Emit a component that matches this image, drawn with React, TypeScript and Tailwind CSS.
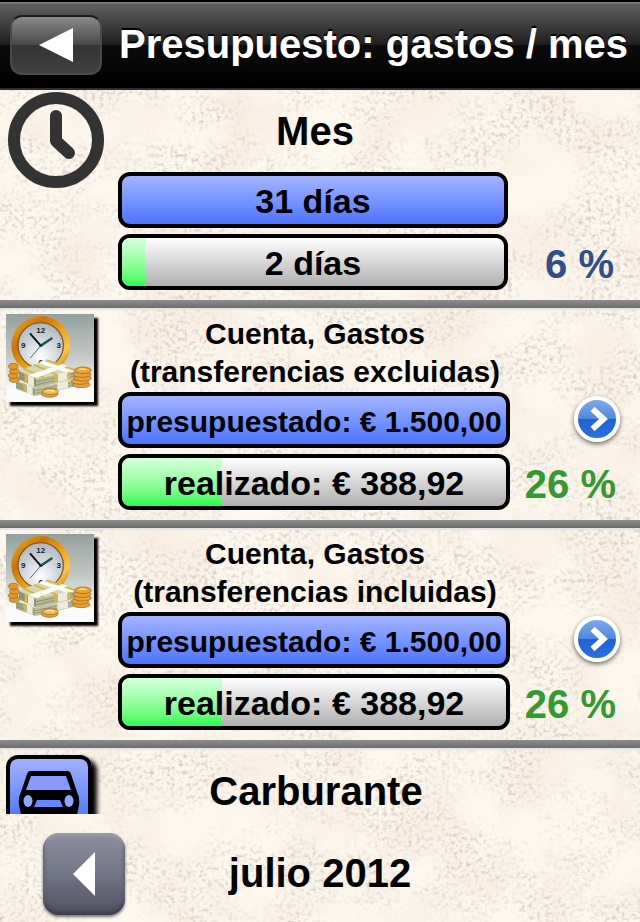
import React from 'react';

const bold = "font-['Liberation_Sans',Helvetica,Arial,sans-serif] font-bold";

function PaperTexture() {
  return (
    <svg className="absolute inset-0 -z-10 h-full w-full" aria-hidden="true">
      <filter id="patches" x="0" y="0" width="100%" height="100%">
        <feTurbulence type="fractalNoise" baseFrequency="0.014" numOctaves={5} seed={4} />
        <feColorMatrix values="0 0 0 0 0.93  0 0 0 0 0.82  0 0 0 0 0.74  1.4 0 0 0 -0.48" />
      </filter>
      <filter id="grain" x="0" y="0" width="100%" height="100%">
        <feTurbulence type="fractalNoise" baseFrequency="0.24" numOctaves={3} seed={11} result="fine" />
        <feColorMatrix in="fine" values="0 0 0 0 0.62  0 0 0 0 0.55  0 0 0 0 0.48  2.2 0 0 0 -1.02" result="specks" />
        <feTurbulence type="fractalNoise" baseFrequency="0.014 0.02" numOctaves={5} seed={23} />
        <feColorMatrix values="0 0 0 0 0  0 0 0 0 0  0 0 0 0 0  0 3 0 0 -1" result="mask" />
        <feComposite in="specks" in2="mask" operator="in" />
      </filter>
      <rect width="100%" height="100%" fill="#fdf8ee" />
      <rect width="100%" height="100%" filter="url(#patches)" />
      <rect width="100%" height="100%" filter="url(#grain)" />
    </svg>
  );
}

function ClockIcon() {
  return (
    <svg viewBox="0 0 96 96" className="size-24" fill="none" stroke="#333333" strokeWidth="12" aria-hidden="true">
      <circle cx="48" cy="48" r="42" />
      <path d="M48 24V49L61 61" strokeLinecap="round" strokeLinejoin="round" />
    </svg>
  );
}

function MoneyIcon() {
  return (
    <svg viewBox="0 0 264 264" className="size-[88px] shadow-[4px_4px_2px_#000]" aria-hidden="true">
      <defs>
        <linearGradient id="moneyBg" x1="0" y1="0" x2="0" y2="1">
          <stop offset="0" stopColor="#94a09c" />
          <stop offset=".5" stopColor="#c5cbc7" />
          <stop offset=".85" stopColor="#fafafa" />
        </linearGradient>
        <linearGradient id="goldRing" x1="0" y1="0" x2="1" y2="1">
          <stop offset="0" stopColor="#f0b52e" />
          <stop offset=".3" stopColor="#c87508" />
          <stop offset=".55" stopColor="#e9a41c" />
          <stop offset=".75" stopColor="#f7c94e" />
          <stop offset="1" stopColor="#a65c05" />
        </linearGradient>
        <radialGradient id="dial" cx=".5" cy=".75" r=".7">
          <stop offset="0" stopColor="#ffffff" />
          <stop offset=".5" stopColor="#d5dae0" />
          <stop offset="1" stopColor="#b0b8c2" />
        </radialGradient>
      </defs>
      <rect width="264" height="264" fill="url(#moneyBg)" />
      <circle cx="104" cy="94" r="88" fill="url(#goldRing)" />
      <circle cx="104" cy="94" r="68" fill="url(#dial)" stroke="#8a5a18" strokeWidth="4" />
      <g className="font-['Liberation_Sans',Arial,sans-serif] text-[24px] font-bold" fill="#15191d" textAnchor="middle">
        <text x="104" y="56">12</text>
        <text x="52" y="103">9</text>
        <text x="158" y="103">3</text>
        <text x="104" y="154">6</text>
      </g>
      <path d="M104 95L72 58" stroke="#101417" strokeWidth="6" />
      <path d="M104 95L139 72" stroke="#15534f" strokeWidth="7" />
      <path d="M114 84L72 133" stroke="#3a7d80" strokeWidth="3" />
      <circle cx="104" cy="94" r="5" fill="#15333a" />
      <g fill="#e39a2c" stroke="#9c5c12" strokeWidth="2">
        <ellipse cx="25" cy="197" rx="15" ry="8" />
        <ellipse cx="21" cy="185" rx="14" ry="8" />
        <ellipse cx="26" cy="172" rx="15" ry="8" />
        <ellipse cx="22" cy="157" rx="14" ry="9" />
      </g>
      <path d="M30 200L88 222V246L30 224Z" fill="#a5a884" />
      <path d="M88 222L214 196V216L88 246Z" fill="#bdbf9b" />
      <path d="M38 170L92 194V221L38 196Z" fill="#959a78" />
      <path d="M92 194L216 168V192L92 221Z" fill="#b7ba94" />
      <path d="M38 170L122 138L220 166L92 194Z" fill="#d5d7b2" />
      <g stroke="#7b8062" strokeWidth="2" fill="none">
        <path d="M38 178L92 203L216 176M38 187L92 212L216 184M30 208L88 230L214 203M30 216L88 238L214 210" />
      </g>
      <path d="M54 164L112 190M84 152L152 182M122 138L212 170" stroke="#d6b13c" strokeWidth="5" />
      <path d="M98 147L112 142L206 172L184 177ZM68 183L168 151L186 156L90 192Z" fill="#fbfbf5" />
      <path d="M66 183L84 191V217L66 209ZM62 212L80 219V243L62 236ZM156 180L184 174V198L156 204ZM154 208L186 201V221L154 228Z" fill="#ecebdc" />
      <path d="M56 178L64 182V208L56 205ZM186 174L192 173V197L186 198ZM52 208L60 211V235L52 232ZM146 182L154 180V205L146 207Z" fill="#d9b646" />
      <g fill="#e8a236" stroke="#9c5c12" strokeWidth="2">
        <ellipse cx="226" cy="212" rx="26" ry="9" />
        <ellipse cx="222" cy="202" rx="26" ry="9" />
        <ellipse cx="230" cy="192" rx="26" ry="9" />
        <ellipse cx="228" cy="181" rx="27" ry="9" />
        <ellipse cx="231" cy="169" rx="25" ry="10" />
        <ellipse cx="131" cy="240" rx="25" ry="10" />
        <ellipse cx="133" cy="233" rx="24" ry="9" fill="#f0bb58" />
      </g>
      <path d="M218 168Q229 162 241 168M120 232Q132 226 145 233" stroke="#ffe694" strokeWidth="4" fill="none" />
    </svg>
  );
}

function CarIcon() {
  return (
    <div className="h-[88px] w-[86px] rounded-xl border-4 border-black bg-linear-to-b from-[#a4b0ff] to-[#2e62ff] shadow-[5px_4px_5px_#000]">
      <svg viewBox="0 0 78 80" className="h-20 w-[78px]" aria-hidden="true">
        <path d="M20 12H57Q60 12 61 15L67 33Q70 38 69 46L67 56V66H57V58H21V66H11V56L9 46Q8 38 11 33L17 15Q18 12 20 12Z" fill="#000" />
        <path d="M21 17H56L61 31H16Z" fill="#8798ff" />
        <ellipse cx="18" cy="42" rx="4.5" ry="6" fill="#8fa6ff" />
        <ellipse cx="59" cy="42" rx="4.5" ry="6" fill="#8fa6ff" />
        <path d="M27 41H50L53 48H24Z" fill="#6487ff" />
      </svg>
    </div>
  );
}

type BarProps = { text: string; size: string; percent?: number };

function Bar({ text, size, percent }: BarProps) {
  const blue = percent === undefined;
  return (
    <div
      className={
        'relative flex h-14 items-center justify-center overflow-hidden rounded-xl border-4 border-black whitespace-nowrap ' +
        (blue ? 'bg-linear-to-b from-[#a3b4ff] to-[#4e72ff]' : 'bg-linear-to-b from-white to-[#b0b0b0]')
      }
    >
      {!blue && (
        <div
          className="absolute inset-y-0 left-0 bg-linear-to-b from-[#d4ffdc] to-[#22fb50]"
          style={{ width: percent + '%' }}
        />
      )}
      <span className={'relative pt-[2px] ' + size}>{text}</span>
    </div>
  );
}

const rowGrid = 'grid grid-cols-[118px_minmax(0,1fr)_130px]';

function Divider() {
  return <div className="h-[10px] shrink-0 border-b-2 border-[#e4e4e4] bg-linear-to-b from-[#8f8f8f] to-[#6c6c6c]" />;
}

function Account({ kind, label }: { kind: string; label: string }) {
  return (
    <section className={rowGrid + ' h-[210px] shrink-0'}>
      <div className="pt-1 pl-[6px]">
        <MoneyIcon />
      </div>
      <div className="flex flex-col gap-[6px]">
        <h2 className="flex h-[76px] flex-col items-center pt-[5px] pl-[2px] text-[30px] leading-[38px] whitespace-nowrap">
          <span>Cuenta, Gastos</span>
          <span>{kind}</span>
        </h2>
        <Bar text="presupuestado: € 1.500,00" size="text-[30px]" />
        <Bar text="realizado: € 388,92" size="text-[34px]" percent={26} />
      </div>
      <div className="flex flex-col items-end justify-between pt-[86px] pr-5 pb-3">
        <button
          type="button"
          aria-label={label}
          className="size-[46px] rounded-full border-4 border-white bg-[linear-gradient(#7fa9e8,#4c88e0_50%,#1f62d2_50%,#2a70e0)] shadow-[0_2px_5px_#0009]"
        >
          <svg viewBox="0 0 38 38" className="size-full" fill="none" stroke="#fff" strokeWidth="6" aria-hidden="true">
            <path d="M14.5 9L25.5 19L14.5 29" />
          </svg>
        </button>
        <p className="pr-1 text-[40px] leading-[48px] whitespace-nowrap text-[#339933]">26 %</p>
      </div>
    </section>
  );
}

export default function App() {
  return (
    <div className={'relative isolate flex h-screen flex-col overflow-hidden text-black ' + bold}>
      <PaperTexture />
      <header className="flex h-[90px] shrink-0 items-center gap-[17px] border-t-2 border-b-2 border-t-black border-b-[#2c2c32] bg-[linear-gradient(#8a8a8a_0,#606060_2px,#1d1d1d_50%,#0b0b0b_50%,#000_100%)] pl-[10px]">
        <button
          type="button"
          aria-label="Atrás"
          className="flex h-[60px] w-[92px] shrink-0 items-center justify-center rounded-xl border-2 border-[#4a4a4a] border-t-[#1c1c1c] bg-[linear-gradient(#8a8a8a,#484848_50%,#343434_50%,#404040)]"
        >
          <svg viewBox="0 0 34 34" className="size-[34px]" aria-hidden="true">
            <path d="M34 0V34L0 17Z" fill="#fff" />
          </svg>
        </button>
        <h1 className="pb-[2px] text-[40px] leading-[48px] whitespace-nowrap text-white [text-shadow:0_-2px_0_#000]">
          Presupuesto: gastos / mes
        </h1>
      </header>

      <main className="flex min-h-0 flex-1 flex-col overflow-hidden">
        <section className={rowGrid + ' h-[210px] shrink-0'}>
          <div className="pt-[2px] pl-2">
            <ClockIcon />
          </div>
          <div className="flex flex-col gap-[6px] pr-[2px]">
            <h2 className="h-[76px] pt-[17px] pl-1 text-center text-[40px] leading-[48px]">Mes</h2>
            <Bar text="31 días" size="text-[34px]" />
            <Bar text="2 días" size="text-[34px]" percent={6} />
          </div>
          <p className="self-end pr-[26px] pb-3 text-right text-[40px] leading-[48px] whitespace-nowrap text-[#304d8c]">6 %</p>
        </section>
        <Divider />
        <Account kind="(transferencias excluidas)" label="Ver gastos sin transferencias" />
        <Divider />
        <Account kind="(transferencias incluidas)" label="Ver gastos con transferencias" />
        <Divider />
        <section className={rowGrid + ' shrink-0'}>
          <div className="pt-[5px] pl-[6px]">
            <CarIcon />
          </div>
          <h2 className="pt-[17px] pl-1 text-center text-[40px] leading-[48px]">Carburante</h2>
        </section>
      </main>

      <footer className="grid h-[108px] shrink-0 grid-cols-[126px_minmax(0,1fr)_126px] pt-[19px]">
        <button
          type="button"
          aria-label="Mes anterior"
          className="ml-[43px] flex size-[82px] items-center justify-center rounded-2xl bg-linear-to-b from-[#8f919f] via-[#727488] to-[#50525f] shadow-[0_2px_3px_#0008,inset_0_-3px_4px_#3a3c4a,inset_0_2px_3px_#a5a7b3]"
        >
          <svg viewBox="0 0 22 44" className="h-11 w-[22px]" aria-hidden="true">
            <path d="M22 0V44L0 22Z" fill="#fff" />
          </svg>
        </button>
        <p className="pt-4 text-center text-[40px] leading-[48px]">julio 2012</p>
      </footer>
    </div>
  );
}
